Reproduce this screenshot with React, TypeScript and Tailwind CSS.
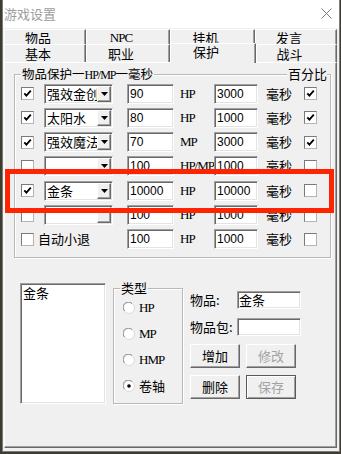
import React from 'react';

type Row = {
  on: boolean;
  item: string;
  v1: string;
  kind: string;
  v2: string;
  pct: boolean;
  arrow?: boolean;
};

const rows: Row[] = [
  { on: true, item: '强效金创药', v1: '90', kind: 'HP', v2: '3000', pct: true },
  { on: true, item: '太阳水', v1: '80', kind: 'HP', v2: '1000', pct: true },
  { on: true, item: '强效魔法药', v1: '70', kind: 'MP', v2: '3000', pct: true },
  { on: false, item: '', v1: '100', kind: 'HP/MP', v2: '1000', pct: false },
  { on: true, item: '金条', v1: '10000', kind: 'HP', v2: '10000', pct: false },
  { on: false, item: '', v1: '100', kind: 'HP', v2: '1000', pct: false, arrow: false },
];

const sunken =
  'border border-t-[#a0a0a0] border-l-[#a0a0a0] border-b-white border-r-white bg-white shadow-[inset_1px_1px_0_#696969,inset_-1px_-1px_0_#e3e3e3]';
const raised =
  'border border-t-white border-l-white border-b-[#696969] border-r-[#696969] bg-[#f0f0f0] shadow-[inset_-1px_-1px_0_#a0a0a0]';

const Check = ({ on }: { on?: boolean }) => (
  <span className="flex h-[13px] w-[13px] shrink-0 items-center justify-center border border-t-[#7a7a7a] border-l-[#7a7a7a] border-b-[#b5b5b5] border-r-[#b5b5b5] bg-white">
    {on && (
      <svg width="9" height="9" viewBox="0 0 9 9">
        <path d="M1.3 4.3 L3.4 6.6 L7.8 1.6" fill="none" stroke="#000" strokeWidth="1.8" />
      </svg>
    )}
  </span>
);

const Field = ({ value, w }: { value: string; w: string }) => (
  <div
    className={`${sunken} ${w} flex h-[20px] shrink-0 items-center pl-[2px] font-['Liberation_Sans',sans-serif] text-[12px] leading-[14px] text-black`}
  >
    {value}
  </div>
);

const Combo = ({ value, arrow = true }: { value: string; arrow?: boolean }) => (
  <div className={`${sunken} ml-[10px] flex h-[20px] w-[69px] shrink-0 items-stretch p-[1px]`}>
    <span className="flex-1 overflow-hidden whitespace-nowrap pl-[1px] text-[13px] leading-[16px]">
      {value}
    </span>
    <span className={`${raised} flex w-[14px] shrink-0 items-center justify-center`}>
      {arrow && (
        <svg width="7" height="4" viewBox="0 0 7 4">
          <path d="M0 0 H7 L3.5 4 Z" fill="#000" />
        </svg>
      )}
    </span>
  </div>
);

const Radio = ({ on }: { on?: boolean }) => (
  <svg width="12" height="12" viewBox="0 0 12 12" className="shrink-0">
    <circle cx="6" cy="6" r="5.5" fill="#fff" stroke="#d8d8d8" />
    <path d="M1.6 9 A5 5 0 0 1 9 1.6" fill="none" stroke="#8a8a8a" />
    {on && <circle cx="6" cy="6" r="1.8" fill="#000" />}
  </svg>
);

const Tab = ({ label, w, latin, top }: { label: string; w: string; latin?: boolean; top?: boolean }) => (
  <div
    className={`${w} flex h-full shrink-0 justify-center border-t border-l border-r border-t-white border-l-white border-r-[#696969] pr-[14px] shadow-[inset_-1px_0_0_#a0a0a0] ${
      top ? 'items-start pt-[1px]' : 'items-center'
    } ${latin ? "font-['Liberation_Serif',serif] text-[13px] tracking-[-1px]" : 'text-[13px]'} leading-[13px]`}
  >
    {label}
  </div>
);

const Kind = ({ text }: { text: string }) => (
  <span className="ml-[6px] w-[34px] shrink-0 whitespace-nowrap font-['Liberation_Serif',serif] text-[13px] leading-[14px] tracking-[-1px]">
    {text}
  </span>
);

const Button = ({ label, disabled, def }: { label: string; disabled?: boolean; def?: boolean }) => (
  <div
    className={`flex h-[24px] w-[50px] items-center justify-center text-[13px] leading-[16px] ${
      def
        ? 'border border-[#5a5a5a] bg-[#f0f0f0] shadow-[inset_1px_1px_0_#fff,inset_-1px_-1px_0_#a0a0a0]'
        : raised
    } ${disabled ? 'text-[#a3a3a3]' : 'text-black'}`}
  >
    {label}
  </div>
);

export default function App() {
  return (
    <div className="relative h-[454px] w-[341px] overflow-hidden bg-[#3e3c2f] font-['Noto_Sans_CJK_SC','Noto_Sans',sans-serif] text-black">
      <div className="ml-[2px] flex h-[452px] w-[338px] flex-col border-x border-b border-[#7c7c7c] bg-[#f0f0f0]">
        {/* title bar */}
        <div className="flex h-[28px] shrink-0 items-center justify-between bg-white pb-[1px] pl-[1px] pr-[7px]">
          <span className="text-[13px] leading-[16px] text-[#9c9c9c]">游戏设置</span>
          <svg width="11" height="11" viewBox="0 0 11 11">
            <path d="M0.5 0.5 L10.5 10.5 M10.5 0.5 L0.5 10.5" stroke="#7a7a7a" strokeWidth="1" />
          </svg>
        </div>

        {/* tabs */}
        <div className="ml-[1px] mt-[1px] w-[333px]">
          <div className="flex h-[15px]">
            <Tab label="物品" w="w-[82px]" top />
            <Tab label="NPC" w="w-[84px]" latin top />
            <Tab label="挂机" w="w-[85px]" top />
            <Tab label="发言" w="w-[82px]" top />
          </div>
          <div className="flex h-[18px]">
            <Tab label="基本" w="w-[82px]" />
            <Tab label="职业" w="w-[84px]" />
            <div className="relative z-10 -mb-[1px] -mt-[1px] flex h-[20px] w-[86px] shrink-0 items-start justify-center border-t border-l border-r border-t-white border-l-white border-r-[#696969] bg-[#f0f0f0] pr-[14px] pt-[1px] text-[13px] leading-[14px] shadow-[inset_-1px_0_0_#a0a0a0]">
              保护
            </div>
            <Tab label="战斗" w="w-[81px]" />
          </div>

          {/* panel */}
          <div className="h-[386px] w-[333px] border border-t-white border-l-white border-b-[#696969] border-r-[#696969] shadow-[inset_-1px_-1px_0_#a0a0a0]">
            {/* protect group */}
            <div className="relative ml-[9px] mt-[11px] h-[184px] w-[317px] border border-[#b9b9b9] shadow-[inset_1px_1px_0_#fff,1px_1px_0_#fff]">
              <span className="absolute -top-[9px] left-[6px] bg-[#f0f0f0] px-[1px] text-[12.5px] leading-[16px]">
                物品保护一<span className="font-['Liberation_Serif',serif] text-[12px] tracking-[-1px]">HP/MP</span>一毫秒
              </span>
              <span className="absolute -top-[9px] right-[3px] bg-[#f0f0f0] pl-[1px] text-[13px] leading-[16px]">
                百分比
              </span>

              <div className="flex flex-col gap-[4.33px] pl-[6px] pt-[8.5px]">
                {rows.map((r, i) => (
                  <div key={i} className="flex h-[20px] items-center">
                    <Check on={r.on} />
                    <Combo value={r.item} arrow={r.arrow} />
                    <div className="ml-[14px]">
                      <Field value={r.v1} w="w-[47px]" />
                    </div>
                    <Kind text={r.kind} />
                    <Field value={r.v2} w="w-[44px]" />
                    <span className="ml-[8px] w-[38px] shrink-0 text-[13px] leading-[16px]">毫秒</span>
                    <Check on={r.pct} />
                  </div>
                ))}
                <div className="flex h-[20px] items-center">
                  <Check />
                  <span className="ml-[4px] w-[89px] shrink-0 text-[13px] leading-[16px]">自动小退</span>
                  <Field value="100" w="w-[47px]" />
                  <Kind text="HP" />
                  <Field value="1000" w="w-[44px]" />
                  <span className="ml-[8px] w-[38px] shrink-0 text-[13px] leading-[16px]">毫秒</span>
                  <Check />
                </div>
              </div>
            </div>

            {/* bottom section */}
            <div className="ml-[15px] mt-[25px] flex items-start">
              <div className={`${sunken} h-[121px] w-[86px] pl-[2px] pt-[1px] text-[13px] leading-[16px]`}>
                金条
              </div>

              <div className="relative ml-[7px] mt-[5px] h-[116px] w-[70px] border border-[#b9b9b9] shadow-[inset_1px_1px_0_#fff,1px_1px_0_#fff]">
                <span className="absolute -top-[9px] left-[6px] bg-[#f0f0f0] px-[1px] text-[13px] leading-[16px]">
                  类型
                </span>
                <div className="flex flex-col gap-[12px] pl-[9px] pt-[12px]">
                  {['HP', 'MP', 'HMP'].map((t) => (
                    <div key={t} className="flex h-[14px] items-center">
                      <Radio />
                      <span className="ml-[4px] font-['Liberation_Serif',serif] text-[13px] leading-[14px] tracking-[-1px]">
                        {t}
                      </span>
                    </div>
                  ))}
                  <div className="flex h-[14px] items-center">
                    <Radio on />
                    <span className="ml-[4px] text-[13px] leading-[16px]">卷轴</span>
                  </div>
                </div>
              </div>

              <div className="ml-[7px] mt-[8px] flex flex-col">
                <div className="flex h-[18px] items-center">
                  <span className="w-[47px] text-[13px] leading-[16px]">物品:</span>
                  <div className={`${sunken} flex h-[18px] w-[64px] items-center pl-[1px] text-[13px] leading-[16px]`}>
                    金条
                  </div>
                </div>
                <div className="mt-[9px] flex h-[18px] items-center">
                  <span className="w-[47px] text-[13px] leading-[16px]">物品包:</span>
                  <div className={`${sunken} h-[18px] w-[64px]`} />
                </div>
                <div className="mt-[8px] flex gap-[6px]">
                  <Button label="增加" />
                  <Button label="修改" disabled />
                </div>
                <div className="mt-[7px] flex gap-[6px]">
                  <Button label="删除" />
                  <Button label="保存" disabled def />
                </div>
              </div>
            </div>
          </div>
        </div>
      </div>

      {/* red highlight */}
      <div className="absolute left-[5px] top-[169px] h-[44px] w-[329px] border-[5px] border-[#ff2400]" />
    </div>
  );
}
